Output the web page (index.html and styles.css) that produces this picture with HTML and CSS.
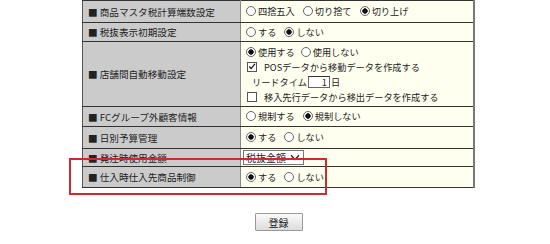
FILE: index.html
```html
<!DOCTYPE html>
<html lang="ja">
<head>
  <meta charset="UTF-8">
  <title>システム設定</title>
  <link rel="stylesheet" href="styles.css">
</head>
<body>
  <div class="page">
    <table class="settings">
      <tr class="h22">
        <th>■ 商品マスタ税計算端数設定</th>
        <td>
          <label><input type="radio" name="round">四捨五入</label>
          <label><input type="radio" name="round">切り捨て</label>
          <label><input type="radio" name="round" checked>切り上げ</label>
        </td>
      </tr>
      <tr class="h19">
        <th>■ 税抜表示初期設定</th>
        <td>
          <label><input type="radio" name="notax">する</label>
          <label><input type="radio" name="notax" checked>しない</label>
        </td>
      </tr>
      <tr class="h65">
        <th>■ 店舗間自動移動設定</th>
        <td class="multi">
          <div class="line">
            <label><input type="radio" name="move" checked>使用する</label>
            <label><input type="radio" name="move">使用しない</label>
          </div>
          <div class="line">
            <label class="check"><span class="box"><svg width="9" height="9" viewBox="0 0 9 9"><path d="M1.5 4.5 L3.5 6.8 L7.8 1.5" fill="none" stroke="#111" stroke-width="1.4"/></svg></span>POSデータから移動データを作成する</label>
          </div>
          <div class="line lead">
            リードタイム<span class="num">1</span>日
          </div>
          <div class="line">
            <label class="check"><span class="box"></span>移入先行データから移出データを作成する</label>
          </div>
        </td>
      </tr>
      <tr class="h20">
        <th>■ FCグループ外顧客情報</th>
        <td>
          <label><input type="radio" name="fc">規制する</label>
          <label><input type="radio" name="fc" checked>規制しない</label>
        </td>
      </tr>
      <tr class="h22">
        <th>■ 日別予算管理</th>
        <td>
          <label><input type="radio" name="budget" checked>する</label>
          <label><input type="radio" name="budget">しない</label>
        </td>
      </tr>
      <tr class="h18">
        <th>■ 発注時使用金額</th>
        <td class="sel">
          <span class="select">税抜金額<svg width="10" height="7" viewBox="0 0 10 7"><path d="M1 1.2 L5 5.5 L9 1.2" fill="none" stroke="#222" stroke-width="1.3"/></svg></span>
        </td>
      </tr>
      <tr class="h21">
        <th>■ 仕入時仕入先商品制御</th>
        <td>
          <label><input type="radio" name="supplier" checked>する</label>
          <label><input type="radio" name="supplier">しない</label>
        </td>
      </tr>
    </table>

    <div class="actions">
      <button type="button" class="btn">登録</button>
    </div>

    <div class="highlight"></div>
  </div>
</body>
</html>
```

FILE: styles.css
```css
body {
  margin: 0;
  background: #fff;
  color: #222;
  font-family: "Noto Sans CJK JP", "DejaVu Sans", sans-serif;
  font-size: 9.5px;
}
.page {
  position: relative;
  width: 550px;
  height: 244px;
}
.settings {
  margin-left: 82px;
  width: 393px;
  border-collapse: collapse;
  border-left: 1px solid #555;
  border-right: 2px solid #777;
}
.settings th,
.settings td {
  border-top: 1px solid #333;
  border-bottom: 1px solid #333;
  padding: 0;
  font-weight: normal;
  white-space: nowrap;
  line-height: 14px;
}
.settings th {
  width: 152px;
  background: #cbcbcb;
  text-align: left;
  padding-left: 5px;
  border-right: 1px solid #888;
  font-size: 9.6px;
}
.settings td {
  background: #fffff0;
  padding-left: 5px;
  font-size: 9.2px;
}
.h18 { height: 18px; }
.h19 { height: 19px; }
.h20 { height: 20px; }
.h21 { height: 21px; }
.h22 { height: 22px; }
.h65 { height: 65px; }

label {
  display: inline-flex;
  align-items: center;
  margin-right: 6px;
}
input[type="radio"] {
  appearance: none;
  -webkit-appearance: none;
  width: 10px;
  height: 10px;
  margin: 0 2px 0 0;
  border: 1px solid #666;
  border-radius: 50%;
  background: #fff;
}
input[type="radio"]:checked {
  background: radial-gradient(circle, #111 0, #111 2.4px, #fff 3px);
}
.multi {
  padding-top: 3px;
  padding-bottom: 3px;
}
.multi .line {
  height: 15px;
  display: flex;
  align-items: center;
}
.check .box {
  width: 8px;
  height: 8px;
  border: 1px solid #555;
  background: #fff;
  margin: 0 7px 0 1px;
  display: inline-flex;
  align-items: center;
  justify-content: center;
}
.lead {
  padding-left: 6px;
}
.num {
  display: inline-block;
  width: 18px;
  height: 10px;
  line-height: 10px;
  border: 1px solid #666;
  border-top-color: #333;
  background: #fff;
  text-align: right;
  padding-right: 2px;
  margin: 0 1px;
}
.sel {
  vertical-align: top;
}
.settings td.sel {
  padding-left: 2px;
}
.select {
  display: inline-flex;
  align-items: center;
  gap: 4px;
  height: 13px;
  padding: 0 3px 0 2px;
  border: 1px solid #777;
  background: #fff;
  margin-top: 1px;
  font-size: 10px;
}
.actions {
  margin-left: 82px;
  width: 393px;
  text-align: center;
  margin-top: 25px;
}
.btn {
  width: 48px;
  height: 18px;
  padding: 0;
  font-family: inherit;
  font-size: 10px;
  color: #222;
  border: 1px solid #999;
  border-radius: 1px;
  background: linear-gradient(#fafafa, #dcdcdc);
}
.highlight {
  position: absolute;
  left: 69px;
  top: 158px;
  width: 254px;
  height: 33px;
  border: 2px solid #d02a2a;
}
```
